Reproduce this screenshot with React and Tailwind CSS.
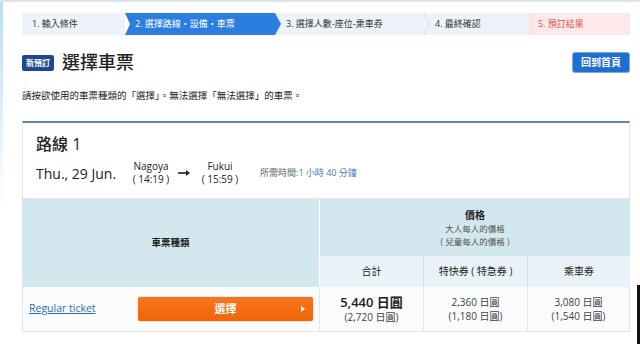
import React from "react";

const font = { fontFamily: '"Open Sans", "Noto Sans CJK TC", sans-serif' };

function Steps() {
  return (
    <div className="flex h-[22px] text-[9px] leading-[22px] text-[#333]">
      <div className="w-[103px] bg-[#eef3f9] pl-[10px]">1. 輸入條件</div>
      <div
        className="w-[156px] -mr-[6px] bg-[#2b7de0] pl-[10px] text-white relative z-10"
        style={{ clipPath: "polygon(0 0, calc(100% - 6px) 0, 100% 50%, calc(100% - 6px) 100%, 0 100%, 5px 50%)" }}
      >
        2. 選擇路線・設備・車票
      </div>
      <div className="w-[150px] bg-[#eef3f9] pl-[11px]">3. 選擇人數-座位-乘車券</div>
      <div className="relative w-[103px] bg-[#eef3f9] pl-[10px]">
        <svg className="absolute -left-[1px] top-0" width="6" height="22" viewBox="0 0 6 22">
          <path d="M0 0 L5 11 L0 22" fill="none" stroke="#d5dde6" strokeWidth="1" />
        </svg>
        4. 最終確認
      </div>
      <div className="relative flex-1 bg-[#fde9e9] pl-[10px] text-[#e0554f]">
        <svg className="absolute left-0 top-0" width="6" height="22" viewBox="0 0 6 22">
          <path d="M0 0 L5 11 L0 22" fill="none" stroke="#eed8d8" strokeWidth="1" />
        </svg>
        5. 預訂結果
      </div>
    </div>
  );
}

export default function App() {
  return (
    <div className="relative w-[640px] h-[344px] overflow-hidden bg-white border-t-2 border-[#dfe3ea]" style={font}>
      <div className="absolute left-0 top-0 w-[3px] h-[210px] bg-gradient-to-b from-[#b9def6] to-transparent" />
      <div className="absolute right-0 top-[283px] w-[3px] h-[61px] bg-[#111]" />
      <div className="pl-[22px] pr-[10px] pt-[11px]">
        <Steps />

        <div className="mt-[18px] flex items-center justify-between h-[19px]">
          <div className="flex items-center">
            <span className="bg-[#1d4a8f] text-white text-[8px] font-bold rounded-[2px] px-[4px] h-[16px] leading-[16px]">新預訂</span>
            <span className="ml-[8px] text-[18px] leading-[19px] text-[#222] font-medium">選擇車票</span>
          </div>
          <button className="mr-[1px] h-[19px] w-[56px] rounded-[2px] bg-[#1f6fd3] text-white text-[10px] font-bold shadow-[0_0_0_1px_#7aa9e0]">回到首頁</button>
        </div>

        <div className="mt-[17px] text-[9.5px] leading-[14px] text-[#222]">
          請按欲使用的車票種類的「選擇」。無法選擇「無法選擇」的車票。
        </div>

        <div className="mt-[18px] border-t-2 border-[#5b87b2] border-x border-x-[#e3e7eb] border-b border-b-[#e3e7eb] px-[13px] pt-[10px] pb-[12px]">
          <div className="text-[16px] leading-[22px] text-[#222] font-medium">路線 1</div>
          <div className="mt-[5px] flex items-center text-[#222]">
            <div className="w-[95px] text-[14px] font-medium">Thu., 29 Jun.</div>
            <div className="w-[40px] text-center text-[10px] leading-[13px] whitespace-nowrap">
              <div>Nagoya</div>
              <div>( 14:19 )</div>
            </div>
            <svg width="13" height="8" viewBox="0 0 13 8" className="ml-[7px]">
              <path d="M0 4 H9" stroke="#222" strokeWidth="1.6" />
              <path d="M8 1 L12 4 L8 7 Z" fill="#222" />
            </svg>
            <div className="ml-[5px] w-[48px] text-center text-[10px] leading-[13px] whitespace-nowrap">
              <div>Fukui</div>
              <div>( 15:59 )</div>
            </div>
            <div className="ml-[16px] text-[9px] text-[#666]">
              所需時間:<span className="text-[#3d7cc4]">1 小時 40 分鐘</span>
            </div>
          </div>
        </div>

        <div className="grid grid-cols-[298px_104px_104px_102px] text-[#222]">
          <div className="row-span-2 bg-[#d3e8ee] flex items-center justify-center text-[9.5px] font-bold border-r border-white">車票種類</div>
          <div className="col-span-3 h-[57px] bg-[#d3e8ee] flex flex-col items-center justify-center text-[8.5px] leading-[13px] text-[#555]">
            <div className="text-[10px] font-bold text-[#222] leading-[14px]">價格</div>
            <div>大人每人的價格</div>
            <div>( 兒童每人的價格 )</div>
          </div>
          <div className="h-[31px] bg-[#e9f3f7] flex items-center justify-center text-[10px] border-r border-[#d5e3e9]">合計</div>
          <div className="h-[31px] bg-[#e9f3f7] flex items-center justify-center text-[10px] border-r border-[#d5e3e9]">特快券 ( 特急券 )</div>
          <div className="h-[31px] bg-[#e9f3f7] flex items-center justify-center text-[10px]">乘車券</div>

          <div className="h-[45px] bg-[#fafbfb] flex items-center border-l border-b border-[#e3e7eb] border-r">
            <a className="ml-[6px] text-[10.5px] text-[#2a6ebb] underline w-[109px]">Regular ticket</a>
            <button className="relative h-[24px] w-[175px] rounded-[2px] bg-gradient-to-b from-[#f7761c] to-[#f06407] text-white text-[11px] font-bold shadow-[0_0_1px_#c9580f]">
              選擇
              <span className="absolute right-[8px] top-[9px] w-0 h-0 border-y-[3px] border-y-transparent border-l-[4px] border-l-white" />
            </button>
          </div>
          <div className="h-[45px] bg-[#fafbfb] flex flex-col items-center justify-center border-b border-r border-[#e3e7eb]">
            <div className="text-[13px] font-semibold leading-[16px]">5,440 日圓</div>
            <div className="text-[10px] leading-[14px] text-[#444]">(2,720 日圓)</div>
          </div>
          <div className="h-[45px] bg-[#fafbfb] flex flex-col items-center justify-center text-[10px] leading-[14px] text-[#444] border-b border-r border-[#e3e7eb]">
            <div>2,360 日圓</div>
            <div>(1,180 日圓)</div>
          </div>
          <div className="h-[45px] bg-[#fafbfb] flex flex-col items-center justify-center text-[10px] leading-[14px] text-[#444] border-b border-r border-[#e3e7eb]">
            <div>3,080 日圓</div>
            <div>(1,540 日圓)</div>
          </div>
        </div>
      </div>
    </div>
  );
}
